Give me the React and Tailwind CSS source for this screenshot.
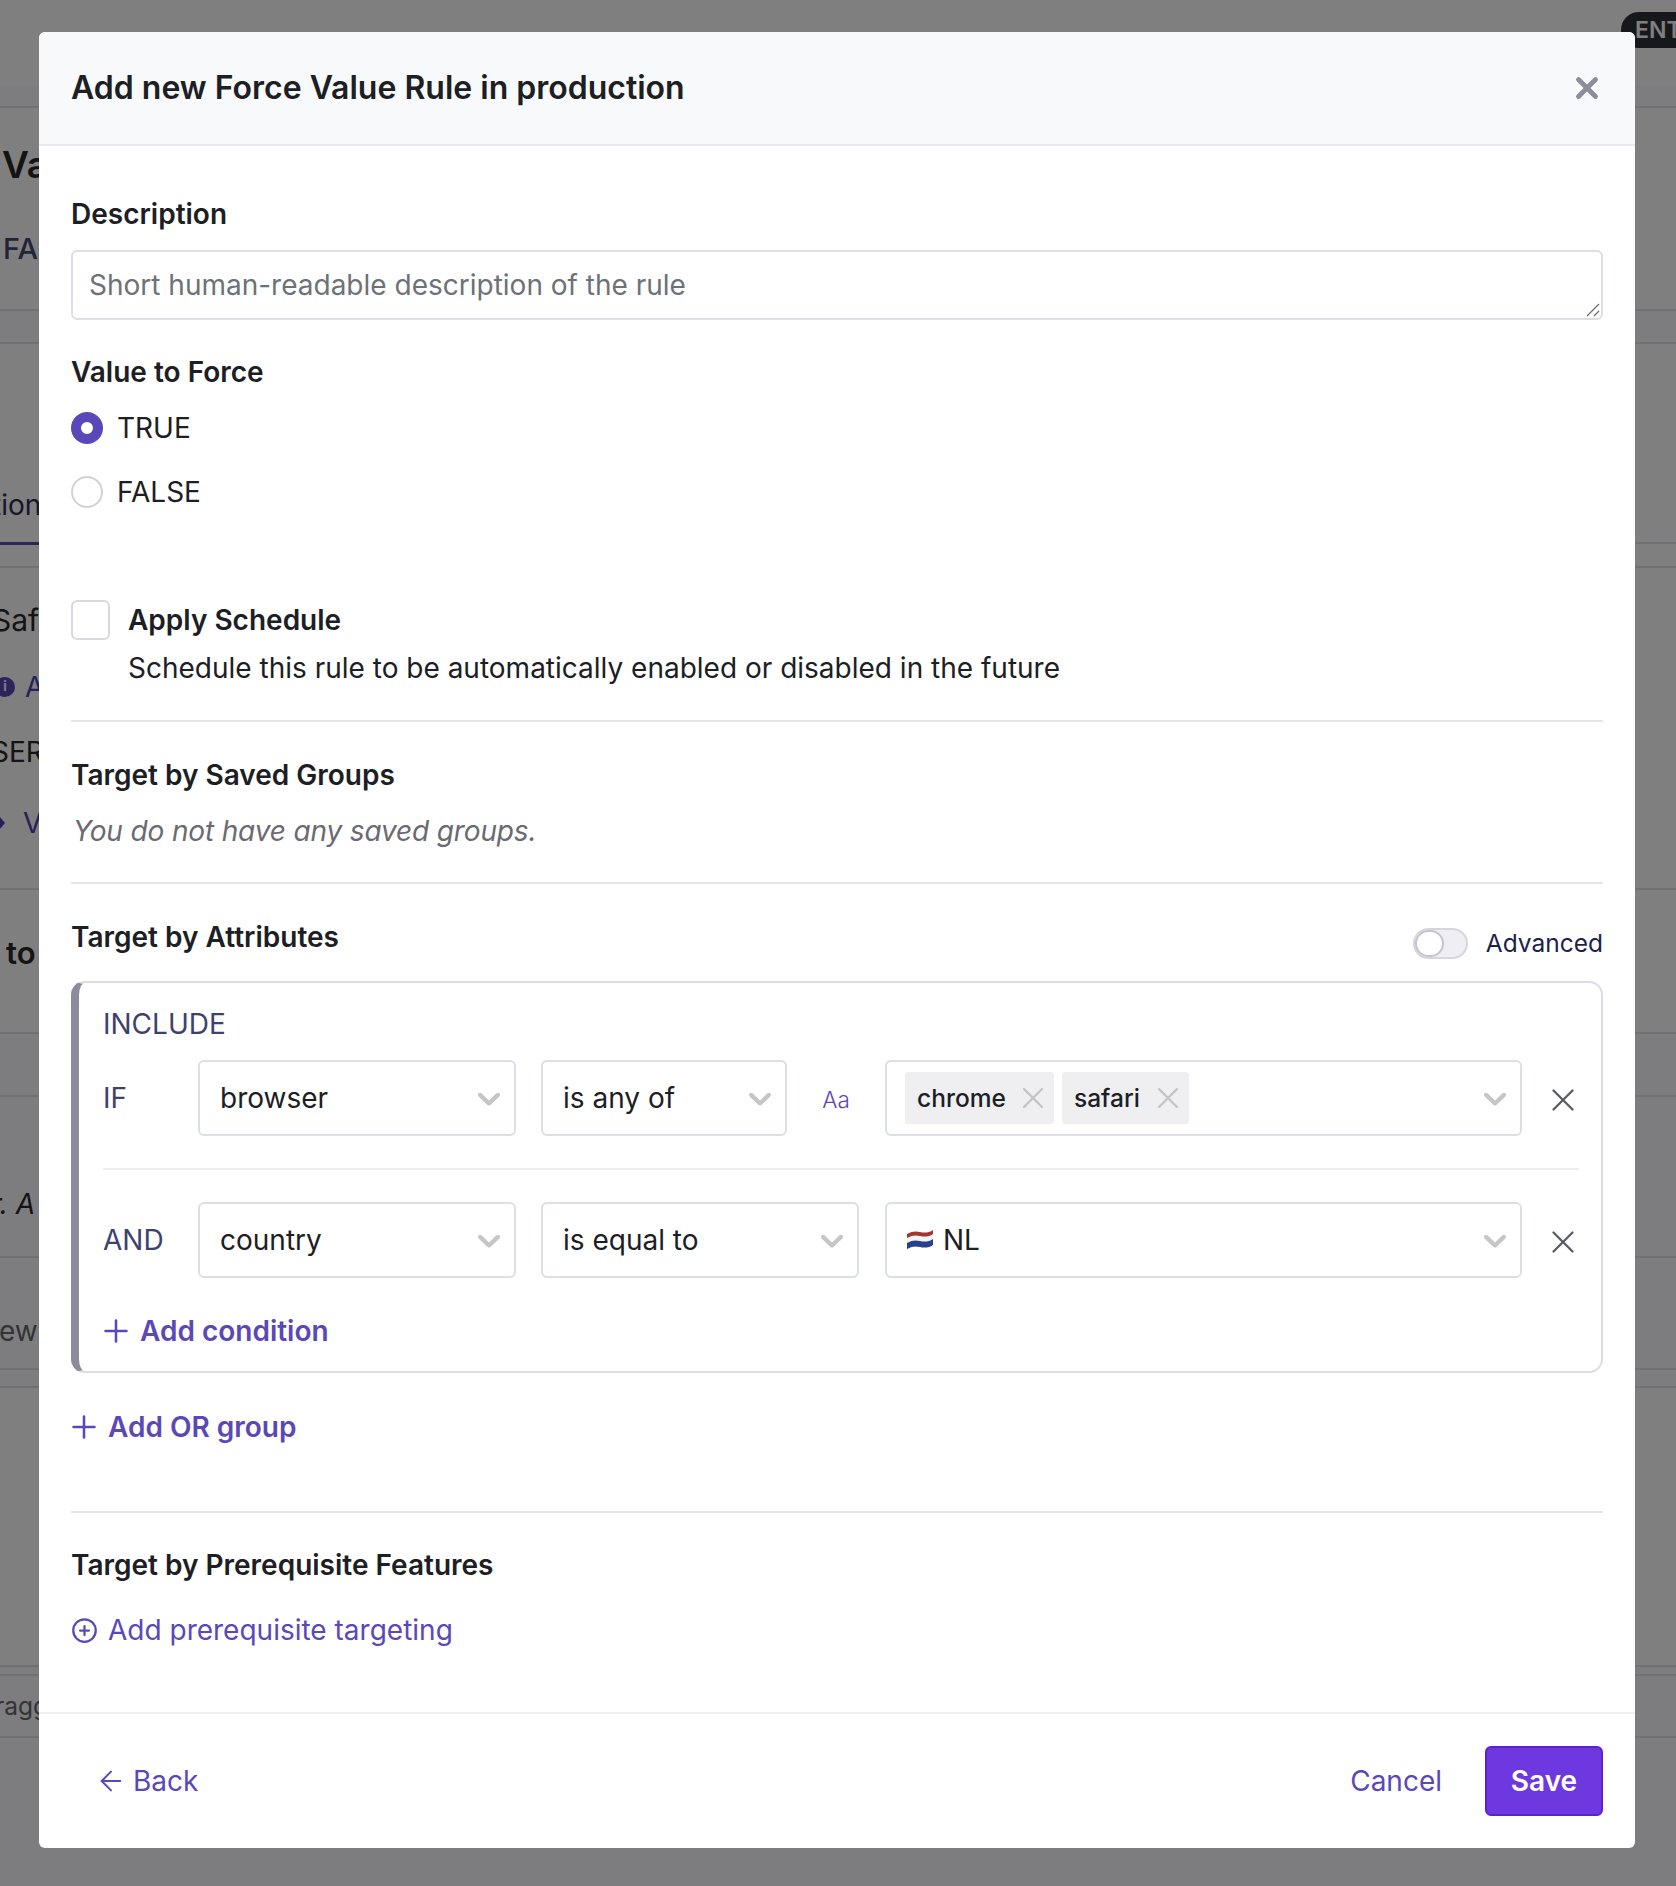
import React from "react";
import { ArrowLeft, CirclePlus, Plus, X } from "lucide-react";

function Chevron() {
  return (
    <svg viewBox="0 0 20 20" className="w-[38px] h-[38px] fill-[#c6c6c6] shrink-0">
      <path d="M4.516 7.548c0.436-0.446 1.043-0.481 1.576 0l3.908 3.747 3.908-3.747c0.533-0.481 1.141-0.446 1.574 0 0.436 0.445 0.408 1.197 0 1.615-0.406 0.418-4.695 4.502-4.695 4.502-0.217 0.223-0.502 0.335-0.787 0.335s-0.57-0.112-0.789-0.335c0 0-4.287-4.084-4.695-4.502s-0.436-1.17 0-1.615z" />
    </svg>
  );
}

function Flag() {
  return (
    <svg viewBox="0 0 26 20" className="w-[26px] h-[20px] shrink-0">
      <path d="M0 4c5-3 9-3 13-2s9 1 13-2v7c-4 3-9 3-13 2S5 8 0 11z" fill="#a5352f" />
      <path d="M0 8c5-3 9-3 13-2s9 1 13-2v7c-4 3-9 3-13 2S5 12 0 15z" fill="#f4f4f6" />
      <path d="M0 13c5-3 9-3 13-2s9 1 13-2v6c-4 3-9 3-13 2s-8-1-13 2z" fill="#27408f" />
    </svg>
  );
}

function Select({ className, children }) {
  return (
    <div className={"h-[76px] flex items-center justify-between pl-[20px] pr-[6px] border-2 border-[#dcdfe4] rounded-[6px] bg-white " + className}>
      <span className="flex items-center">{children}</span>
      <Chevron />
    </div>
  );
}

function Chip({ label, className }) {
  return (
    <span className={"h-[52px] flex items-center justify-between pl-[12px] pr-[3px] rounded-[3px] bg-[#efeff2] text-[24.5px] font-medium text-[#1c2024] " + className}>
      {label}
      <X size={36} strokeWidth={1.6} className="text-[#c4c4c4]" />
    </span>
  );
}

function RemoveButton() {
  return (
    <div className="w-[57px] flex justify-end">
      <X size={38} strokeWidth={1.5} className="text-[#5c5c64] mr-[-3px] mt-[4px]" />
    </div>
  );
}

// the page behind the dialog, only its edges stay visible
function BackgroundPage() {
  return (
    <div className="absolute inset-0 flex flex-col bg-white text-[28px] text-[#282828]">
      <div className="h-[86px] pt-[12px] pl-[1621px]">
        <span className="flex items-center w-max h-[36px] pl-[14px] pr-[15px] rounded-full bg-[#2e3039] text-white text-[23px] font-semibold">ENTERPRISE</span>
      </div>
      <div className="h-[22px] bg-[#fbfbff] border-b-2 border-[#e2e2ea]" />
      <div className="h-[114px] flex items-center pl-[2px] text-[37px] font-semibold">Va</div>
      <div className="h-[54px] flex items-center pl-[3px] text-[29px] font-medium text-[#46466e]">FA</div>
      <div className="h-[33px]" />
      <div className="h-[35px] bg-[#fbfbff] border-y-2 border-[#e2e2ea]" />
      <div className="h-[132px]" />
      <div className="h-[58px] flex items-center ml-[-8px] text-[#2e2e55]">tion</div>
      <div className="h-[10px] border-b-2 border-[#e2e2ea]">
        <div className="h-[11px] w-[60px] border-b-[3px] border-[#5b48b8]" />
      </div>
      <div className="h-[24px] border-b-2 border-[#e2e2ea]" />
      <div className="h-[104px] flex items-center ml-[-8px] text-[30px]">Safari</div>
      <div className="h-[30px] flex items-center gap-[10px] ml-[-5px] text-[#4f3fb0]">
        <span className="w-[20px] h-[20px] flex items-center justify-center rounded-full bg-[#5b48b8] text-white text-[13px] font-bold">i</span>
        <span>A</span>
      </div>
      <div className="h-[100px] flex items-center ml-[-9px]">SER</div>
      <div className="h-[42px] flex items-center gap-[18px] text-[#4f3fb0]">
        <span className="w-[5px] h-[12px] bg-[#4f3fb0] [clip-path:polygon(0_0,100%_50%,0_100%)]" />
        <span>V</span>
      </div>
      <div className="h-[46px] border-b-2 border-[#e2e2ea]" />
      <div className="h-[126px] flex items-center pl-[6px] text-[31px] font-semibold">to</div>
      <div className="h-[18px] border-b-2 border-[#e2e2ea]" />
      <div className="flex flex-col bg-[#fafafe]">
        <div className="h-[63px] border-b-2 border-[#e2e2ea]" />
        <div className="h-[78px]" />
        <div className="h-[58px] flex items-center ml-[-9px] italic">r. A</div>
        <div className="h-[25px] border-b-2 border-[#e2e2ea]" />
        <div className="h-[46px]" />
        <div className="h-[54px] flex items-center ml-[-1px] text-[#66666c]">ew</div>
        <div className="h-[12px] border-b-2 border-[#e2e2ea]" />
        <div className="h-[18px] border-b-2 border-[#e2e2ea]" />
      </div>
      <div className="h-[277px]" />
      <div className="flex-1 flex flex-col bg-[#fafafe] text-[#66666c]">
        <div className="h-[11px] border-y-2 border-[#e2e2ea]" />
        <div className="h-[62px] flex items-center ml-[-5px] text-[24.5px] border-b-2 border-[#e2e2ea]">ragg</div>
      </div>
    </div>
  );
}

export default function App() {
  const label = "leading-[34px] font-semibold text-[#1c2024]";
  const link = "flex items-center leading-[34px] text-[#5b48b8]";

  return (
    <div className="relative h-[1886px] w-full overflow-hidden font-[Inter,sans-serif]">
      <BackgroundPage />
      <div className="absolute inset-0 bg-black/50" />

      <div className="absolute left-[39px] top-[32px] w-[1596px] h-[1816px] flex flex-col rounded-[6px] bg-white text-[28px] text-[#1c2024] overflow-hidden">
        <div className="h-[114px] shrink-0 flex items-center justify-between pl-[32px] pr-[31px] bg-[#f8f9fb] border-b-2 border-[#e8e9ee]">
          <h2 className="text-[32px] font-semibold text-[#1c2024]">Add new Force Value Rule in production</h2>
          <X size={34} strokeWidth={3.4} className="text-[#8b8d98]" />
        </div>

        <div className="flex-1 flex flex-col pl-[32px] pr-[32px]">
          <div className={"mt-[51px] " + label}>Description</div>
          <div className="relative mt-[19px] h-[70px]">
            <textarea
              rows={1}
              placeholder="Short human-readable description of the rule"
              className="block h-[70px] w-full px-[16px] py-[16px] leading-[34px] border-2 border-[#dcdfe4] rounded-[6px] bg-white outline-none resize-none placeholder:text-[#6c7278]"
            />
            <svg viewBox="0 0 14 14" className="absolute right-[3px] bottom-[3px] w-[14px] h-[14px] stroke-[#6b6b6b]">
              <path d="M1 13L13 1M8 13l5-5" fill="none" strokeWidth="1.2" />
            </svg>
          </div>

          <div className={"mt-[35px] " + label}>Value to Force</div>
          <div className="mt-[22px] flex items-center gap-[14px] leading-[34px]">
            <span className="w-[32px] h-[32px] rounded-full border-[10px] border-[#5b48b8] bg-white" />
            TRUE
          </div>
          <div className="mt-[30px] flex items-center gap-[14px] leading-[34px]">
            <span className="w-[32px] h-[32px] rounded-full border-2 border-[#d2d2d6] bg-white" />
            FALSE
          </div>

          <div className="mt-[91px] flex items-start gap-[18px]">
            <span className="w-[39px] h-[40px] rounded-[6px] border-2 border-[#d8d9de] bg-white" />
            <div className="pt-[3px] leading-[34px]">
              <div className="font-semibold">Apply Schedule</div>
              <div className="mt-[14px]">Schedule this rule to be automatically enabled or disabled in the future</div>
            </div>
          </div>

          <div className="mt-[35px] h-[2px] bg-[#e6e6e8]" />
          <div className={"mt-[36px] " + label}>Target by Saved Groups</div>
          <div className="mt-[22px] pl-[2px] leading-[34px] italic tracking-[-0.15px] text-[#6a6a72]">You do not have any saved groups.</div>

          <div className="mt-[34px] h-[2px] bg-[#e6e6e8]" />
          <div className="mt-[36px] flex items-start justify-between">
            <div className={label}>Target by Attributes</div>
            <div className="mt-[8px] h-[31px] flex items-center gap-[18px]">
              <div className="w-[55px] h-[31px] rounded-full bg-[#efeff3] border-2 border-[#d6d6de]">
                <div className="w-[29px] h-[27px] rounded-full bg-white border-2 border-[#c4c4cc]" />
              </div>
              <span className="text-[24.5px] leading-[31px] text-[#1d1f4d]">Advanced</span>
            </div>
          </div>

          <div className="mt-[22px] h-[392px] pt-[24px] pl-[24px] pr-[22px] border-2 border-l-8 border-[#dcdce4] border-l-[#8b8b9c] rounded-[14px]">
            <div className="leading-[34px] text-[#3e4170]">INCLUDE</div>

            <div className="mt-[19px] flex items-center">
              <div className="w-[95px] text-[#3e4170]">IF</div>
              <Select className="w-[318px]">browser</Select>
              <Select className="w-[246px] ml-[25px]">is any of</Select>
              <div className="w-[98px] flex justify-center pt-[3px] text-[22.5px] font-light text-[#5b48b8]">Aa</div>
              <div className="flex-1 h-[76px] flex items-center justify-between pl-[18px] pr-[6px] border-2 border-[#dcdfe4] rounded-[6px]">
                <div className="flex gap-[8px]">
                  <Chip label="chrome" className="w-[149px]" />
                  <Chip label="safari" className="w-[127px]" />
                </div>
                <Chevron />
              </div>
              <RemoveButton />
            </div>

            <div className="mt-[32px] h-[2px] bg-[#eeeef0]" />

            <div className="mt-[32px] flex items-center">
              <div className="w-[95px] text-[#3e4170]">AND</div>
              <Select className="w-[318px]">country</Select>
              <Select className="w-[318px] ml-[25px]">is equal to</Select>
              <Select className="flex-1 ml-[26px]">
                <Flag />
                <span className="ml-[10px]">NL</span>
              </Select>
              <RemoveButton />
            </div>

            <div className={"mt-[35px] font-semibold ml-[-5px] gap-[6px] " + link}>
              <Plus size={36} strokeWidth={1.7} />
              Add condition
            </div>
          </div>

          <div className={"mt-[36px] font-semibold ml-[-5px] gap-[6px] " + link}>
            <Plus size={36} strokeWidth={1.7} />
            Add OR group
          </div>

          <div className="mt-[66px] h-[2px] bg-[#e6e6e8]" />
          <div className={"mt-[35px] " + label}>Target by Prerequisite Features</div>
          <div className={"mt-[31px] gap-[10px] " + link}>
            <CirclePlus size={27} strokeWidth={2} />
            Add prerequisite targeting
          </div>
        </div>

        <div className="h-[136px] shrink-0 flex items-center justify-between pl-[56px] pr-[32px] border-t-2 border-[#efeff1]">
          <div className={"gap-[6px] " + link}>
            <ArrowLeft size={32} strokeWidth={1.5} />
            Back
          </div>
          <div className="flex items-center gap-[43px]">
            <span className="text-[#5b48b8]">Cancel</span>
            <button className="w-[118px] h-[70px] rounded-[6px] bg-[#6e38e0] border-2 border-[#5a1fd6] text-white font-semibold">Save</button>
          </div>
        </div>
      </div>
    </div>
  );
}
